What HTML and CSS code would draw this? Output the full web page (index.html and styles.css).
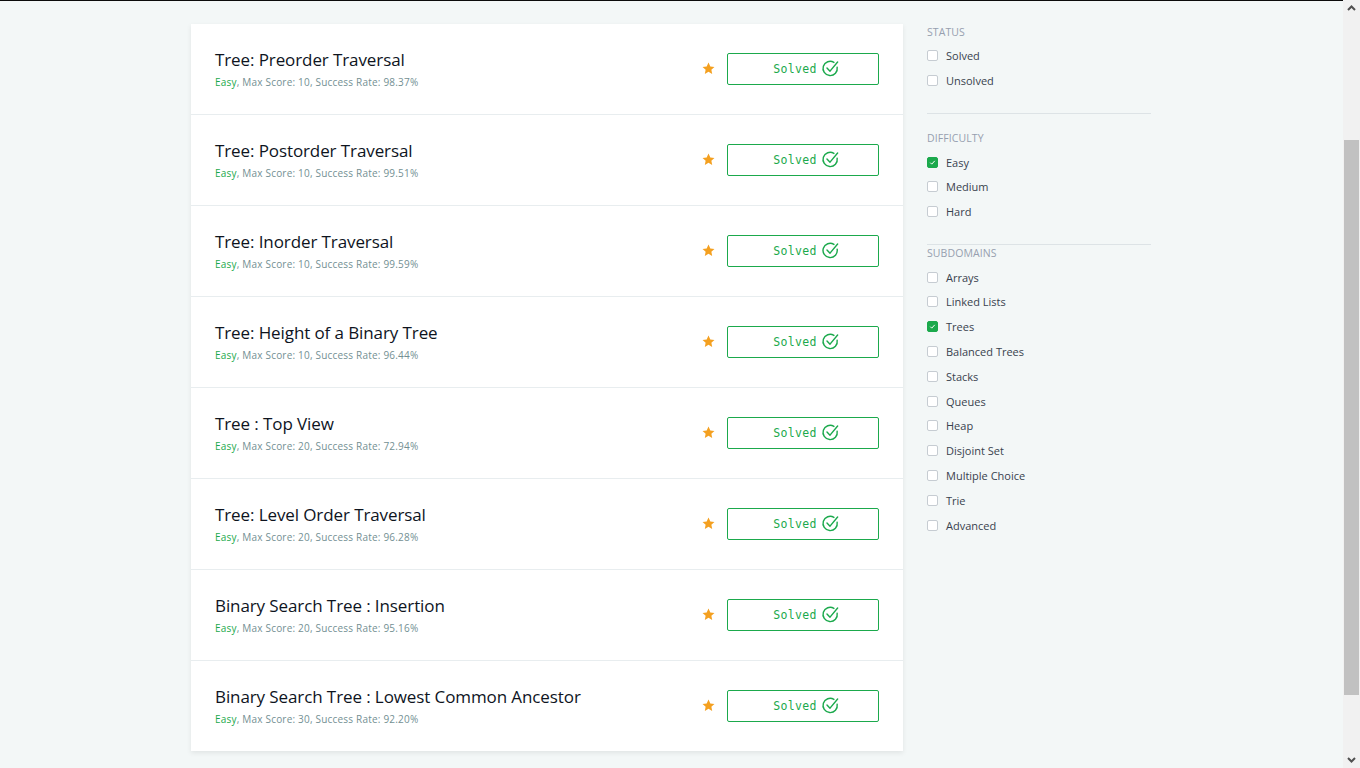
FILE: index.html
```html
<!DOCTYPE html>
<html>
<head>
<meta charset="utf-8">
<link rel="stylesheet" href="styles.css">
</head>
<body>
<div class="topline"></div>
<div class="page">
  <div class="main">
    <div class="card">
      <div class="row">
        <div class="info"><div class="title">Tree: Preorder Traversal</div><div class="meta"><span class="easy">Easy</span>, Max Score: 10, Success Rate: 98.37%</div></div>
        <div class="actions"><svg class="star" viewBox="0 0 24 24"><path d="M12 2.5l2.9 6.1 6.6.8-4.9 4.6 1.3 6.6L12 17.3 6.1 20.6l1.3-6.6L2.5 9.4l6.6-.8z"/></svg><div class="btn">Solved<svg class="chk" viewBox="0 0 20 20"><path d="M17 8.6A7.5 7.5 0 1 1 13.6 3.6"/><path d="M6.3 9.4l3.2 3.4 8-9.6"/></svg></div></div>
      </div>
      <div class="row">
        <div class="info"><div class="title">Tree: Postorder Traversal</div><div class="meta"><span class="easy">Easy</span>, Max Score: 10, Success Rate: 99.51%</div></div>
        <div class="actions"><svg class="star" viewBox="0 0 24 24"><path d="M12 2.5l2.9 6.1 6.6.8-4.9 4.6 1.3 6.6L12 17.3 6.1 20.6l1.3-6.6L2.5 9.4l6.6-.8z"/></svg><div class="btn">Solved<svg class="chk" viewBox="0 0 20 20"><path d="M17 8.6A7.5 7.5 0 1 1 13.6 3.6"/><path d="M6.3 9.4l3.2 3.4 8-9.6"/></svg></div></div>
      </div>
      <div class="row">
        <div class="info"><div class="title">Tree: Inorder Traversal</div><div class="meta"><span class="easy">Easy</span>, Max Score: 10, Success Rate: 99.59%</div></div>
        <div class="actions"><svg class="star" viewBox="0 0 24 24"><path d="M12 2.5l2.9 6.1 6.6.8-4.9 4.6 1.3 6.6L12 17.3 6.1 20.6l1.3-6.6L2.5 9.4l6.6-.8z"/></svg><div class="btn">Solved<svg class="chk" viewBox="0 0 20 20"><path d="M17 8.6A7.5 7.5 0 1 1 13.6 3.6"/><path d="M6.3 9.4l3.2 3.4 8-9.6"/></svg></div></div>
      </div>
      <div class="row">
        <div class="info"><div class="title">Tree: Height of a Binary Tree</div><div class="meta"><span class="easy">Easy</span>, Max Score: 10, Success Rate: 96.44%</div></div>
        <div class="actions"><svg class="star" viewBox="0 0 24 24"><path d="M12 2.5l2.9 6.1 6.6.8-4.9 4.6 1.3 6.6L12 17.3 6.1 20.6l1.3-6.6L2.5 9.4l6.6-.8z"/></svg><div class="btn">Solved<svg class="chk" viewBox="0 0 20 20"><path d="M17 8.6A7.5 7.5 0 1 1 13.6 3.6"/><path d="M6.3 9.4l3.2 3.4 8-9.6"/></svg></div></div>
      </div>
      <div class="row">
        <div class="info"><div class="title">Tree : Top View</div><div class="meta"><span class="easy">Easy</span>, Max Score: 20, Success Rate: 72.94%</div></div>
        <div class="actions"><svg class="star" viewBox="0 0 24 24"><path d="M12 2.5l2.9 6.1 6.6.8-4.9 4.6 1.3 6.6L12 17.3 6.1 20.6l1.3-6.6L2.5 9.4l6.6-.8z"/></svg><div class="btn">Solved<svg class="chk" viewBox="0 0 20 20"><path d="M17 8.6A7.5 7.5 0 1 1 13.6 3.6"/><path d="M6.3 9.4l3.2 3.4 8-9.6"/></svg></div></div>
      </div>
      <div class="row">
        <div class="info"><div class="title">Tree: Level Order Traversal</div><div class="meta"><span class="easy">Easy</span>, Max Score: 20, Success Rate: 96.28%</div></div>
        <div class="actions"><svg class="star" viewBox="0 0 24 24"><path d="M12 2.5l2.9 6.1 6.6.8-4.9 4.6 1.3 6.6L12 17.3 6.1 20.6l1.3-6.6L2.5 9.4l6.6-.8z"/></svg><div class="btn">Solved<svg class="chk" viewBox="0 0 20 20"><path d="M17 8.6A7.5 7.5 0 1 1 13.6 3.6"/><path d="M6.3 9.4l3.2 3.4 8-9.6"/></svg></div></div>
      </div>
      <div class="row">
        <div class="info"><div class="title">Binary Search Tree : Insertion</div><div class="meta"><span class="easy">Easy</span>, Max Score: 20, Success Rate: 95.16%</div></div>
        <div class="actions"><svg class="star" viewBox="0 0 24 24"><path d="M12 2.5l2.9 6.1 6.6.8-4.9 4.6 1.3 6.6L12 17.3 6.1 20.6l1.3-6.6L2.5 9.4l6.6-.8z"/></svg><div class="btn">Solved<svg class="chk" viewBox="0 0 20 20"><path d="M17 8.6A7.5 7.5 0 1 1 13.6 3.6"/><path d="M6.3 9.4l3.2 3.4 8-9.6"/></svg></div></div>
      </div>
      <div class="row last">
        <div class="info"><div class="title">Binary Search Tree : Lowest Common Ancestor</div><div class="meta"><span class="easy">Easy</span>, Max Score: 30, Success Rate: 92.20%</div></div>
        <div class="actions"><svg class="star" viewBox="0 0 24 24"><path d="M12 2.5l2.9 6.1 6.6.8-4.9 4.6 1.3 6.6L12 17.3 6.1 20.6l1.3-6.6L2.5 9.4l6.6-.8z"/></svg><div class="btn">Solved<svg class="chk" viewBox="0 0 20 20"><path d="M17 8.6A7.5 7.5 0 1 1 13.6 3.6"/><path d="M6.3 9.4l3.2 3.4 8-9.6"/></svg></div></div>
      </div>
    </div>

    <div class="sidebar">
      <div class="group">
        <div class="ghead">STATUS</div>
        <label class="opt"><span class="box"></span>Solved</label>
        <label class="opt"><span class="box"></span>Unsolved</label>
      </div>
      <div class="group">
        <div class="ghead">DIFFICULTY</div>
        <label class="opt"><span class="box on"><svg viewBox="0 0 12 12"><path d="M3 6.2l2 2 4-4.4"/></svg></span>Easy</label>
        <label class="opt"><span class="box"></span>Medium</label>
        <label class="opt"><span class="box"></span>Hard</label>
      </div>
      <div class="group sub">
        <div class="ghead">SUBDOMAINS</div>
        <label class="opt"><span class="box"></span>Arrays</label>
        <label class="opt"><span class="box"></span>Linked Lists</label>
        <label class="opt"><span class="box on"><svg viewBox="0 0 12 12"><path d="M3 6.2l2 2 4-4.4"/></svg></span>Trees</label>
        <label class="opt"><span class="box"></span>Balanced Trees</label>
        <label class="opt"><span class="box"></span>Stacks</label>
        <label class="opt"><span class="box"></span>Queues</label>
        <label class="opt"><span class="box"></span>Heap</label>
        <label class="opt"><span class="box"></span>Disjoint Set</label>
        <label class="opt"><span class="box"></span>Multiple Choice</label>
        <label class="opt"><span class="box"></span>Trie</label>
        <label class="opt"><span class="box"></span>Advanced</label>
      </div>
    </div>
  </div>

  <div class="scrollbar">
    <div class="arrow"><svg viewBox="0 0 17 17"><path d="M5 10l3.5-3.5L12 10"/></svg></div>
    <div class="track"><div class="thumb"></div></div>
    <div class="arrow"><svg viewBox="0 0 17 17"><path d="M5 7l3.5 3.5L12 7"/></svg></div>
  </div>
</div>
</body>
</html>
```

FILE: styles.css
```css
* { box-sizing: border-box; }
html, body { margin: 0; padding: 0; height: 768px; overflow: hidden; }
body {
  background: #f3f7f7;
  font-family: "Open Sans", "Liberation Sans", sans-serif;
  color: #0e141e;
}
.topline { height: 1px; background: #0b0b0b; }
.page { display: flex; height: 767px; }
.main {
  flex: 1;
  display: flex;
  align-items: flex-start;
  padding: 23px 0 0 191px;
}
.card {
  width: 712px;
  background: #fff;
  box-shadow: 0 2px 5px rgba(0, 0, 0, 0.08);
}
.row {
  height: 91px;
  display: flex;
  align-items: center;
  justify-content: space-between;
  padding: 0 24px;
  border-bottom: 1px solid #e8edef;
}
.row.last { border-bottom: none; height: 90px; }
.info { display: flex; flex-direction: column; margin-top: -1px; }
.title {
  font-size: 17px;
  line-height: 22px;
  color: #0e141e;
  letter-spacing: -0.1px;
}
.meta {
  font-size: 10px;
  line-height: 14px;
  margin-top: 4px;
  color: #738f93;
  letter-spacing: 0.2px;
}
.easy { color: #1ba94c; }
.actions { display: flex; align-items: center; gap: 11px; }
.star { width: 15px; height: 15px; fill: #f4a020; margin-top: -2px; }
.btn {
  width: 152px;
  height: 32px;
  border: 1px solid #1ba94c;
  border-radius: 2px;
  display: flex;
  align-items: center;
  justify-content: center;
  gap: 4px;
  padding-left: 7px;
  color: #1ba94c;
  font-family: "DejaVu Sans Mono", "Liberation Mono", monospace;
  font-size: 11.5px;
  letter-spacing: 0.3px;
}
.chk {
  width: 19px;
  height: 19px;
  fill: none;
  stroke: #1ba94c;
  stroke-width: 1.5;
  stroke-linecap: round;
  stroke-linejoin: round;
  margin-top: -2px;
}
.sidebar {
  width: 224px;
  margin-left: 24px;
  margin-top: 1px;
}
.group { border-bottom: 1px solid #dde3e6; padding-bottom: 20px; }
.group + .group { padding-top: 17px; }
.group.sub { border-bottom: none; padding-top: 1px; }
.ghead {
  font-size: 10.5px;
  line-height: 14px;
  color: #979faf;
  letter-spacing: 0.1px;
  margin-bottom: 4.6px;
}
.opt {
  display: flex;
  align-items: center;
  height: 24.8px;
  font-size: 11px;
  color: #39424e;
}
.box {
  width: 11px;
  height: 11px;
  border: 1px solid #c6ccd2;
  border-radius: 2px;
  background: #fff;
  margin-right: 8px;
  display: flex;
  align-items: center;
  justify-content: center;
}
.box.on { background: #1ba94c; border-color: #1ba94c; }
.box svg { width: 11px; height: 11px; fill: none; stroke: #fff; stroke-width: 1.3; }
.scrollbar {
  width: 17px;
  background: #f1f1f1;
  display: flex;
  flex-direction: column;
  margin-top: -1px;
  height: 768px;
}
.arrow { height: 17px; display: flex; align-items: center; justify-content: center; }
.arrow svg { width: 17px; height: 17px; fill: none; stroke: #505050; stroke-width: 2; }
.track { flex: 1; padding: 123px 1px 0 1px; }
.thumb { height: 555px; background: #c1c1c1; }
```
